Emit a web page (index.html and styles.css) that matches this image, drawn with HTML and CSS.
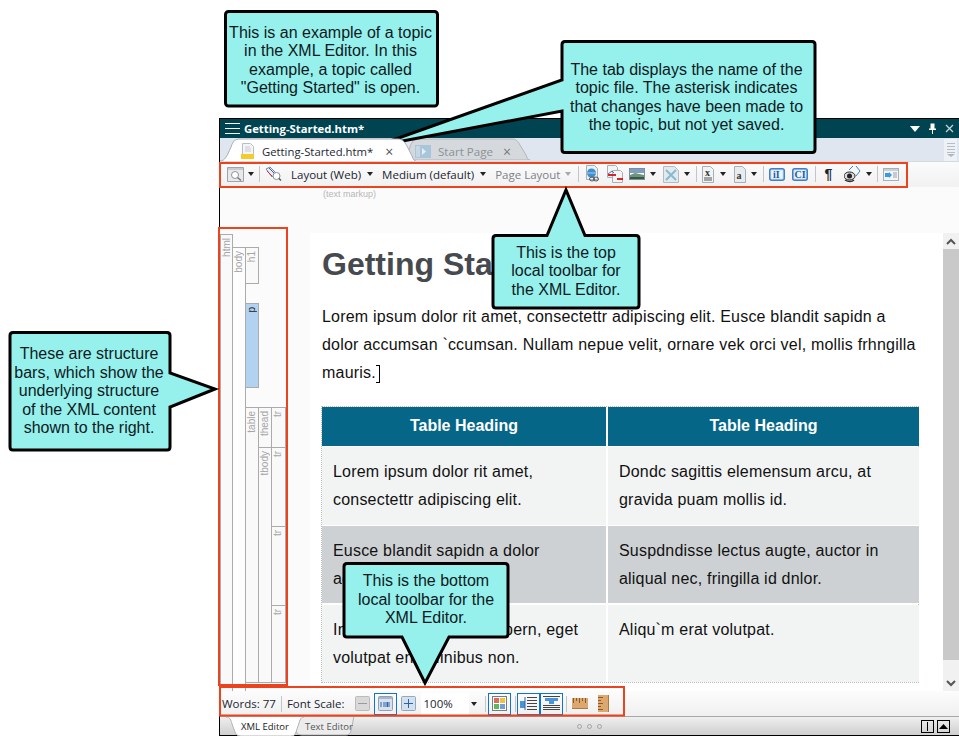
FILE: index.html
```html
<!DOCTYPE html>
<html lang="en">
<head>
<meta charset="utf-8">
<title>XML Editor</title>
<link rel="stylesheet" href="styles.css">
</head>
<body>
<div class="stage">
  <div class="window">
    <header class="titlebar">
      <svg class="hamburger" width="15" height="13" viewBox="0 0 15 13"><path d="M0 1.500h15M0 6.500h15M0 11.500h15" stroke="#fff" stroke-width="1"/></svg>
      <span class="title">Getting-Started.htm*</span>
      <span class="title-actions">
        <svg width="10" height="6" viewBox="0 0 10 6"><path d="M0 0h10L5 6z" fill="#fff"/></svg>
        <svg width="9" height="11" viewBox="0 0 9 11"><path d="M2.500 .5h4v5h1.500v1.500H5v4H4V7H1V5.500h1.500z" fill="#fff"/></svg>
        <svg width="9" height="9" viewBox="0 0 9 9"><path d="M1 1l7 7M8 1L1 8" stroke="#c5d3d8" stroke-width="1.300"/></svg>
      </span>
    </header>

    <nav class="tabstrip">
      <div class="tab tab-active">
        <svg class="tab-shape" width="196" height="23" viewBox="0 0 196 23"><path d="M0 23C5 23 7 18 11 9 13 3 15 1 20 1H178C182 1 184 3 187 8L192 18C193 21 194 23 196 23" fill="#fff" stroke="#a9adb2"/></svg>
        <svg class="tab-icon" width="16" height="17" viewBox="0 0 16 17"><path d="M2.500 .5h8l3 3v12h-11z" fill="#f4f5f6" stroke="#b9bfc5"/><path d="M5 4h5M5 6h6M5 8h6" stroke="#c5ccd2"/><rect x="1" y="11" width="13" height="5" fill="#f5cb2e"/></svg>
        <span class="tab-label">Getting-Started.htm*</span>
        <span class="tab-close">×</span>
      </div>
      <div class="tab tab-idle">
        <svg class="tab-shape" width="128" height="22" viewBox="0 0 128 22"><path d="M0 22C3 20 6 16 8 9 10 3 12 1 17 1H110C114 1 116 3 118 7L124 17C125 20 126 22 128 22z" fill="#d5d8dc" stroke="#b2b6bb"/></svg>
        <svg class="tab-icon" width="16" height="13" viewBox="0 0 16 13"><rect width="16" height="13" fill="#a9c5da"/><rect x="1" y="1" width="4" height="11" fill="#c6d8e6"/><path d="M7 3l4 3.500-4 3.500z" fill="#e6eff6"/></svg>
        <span class="tab-label">Start Page</span>
        <span class="tab-close">×</span>
      </div>
      <div class="tab-overflow">
        <svg width="10" height="14" viewBox="0 0 10 14"><path d="M1 .5h8M1 3.500h8M1 6.500h8M1 9.500h8" stroke="#b4bdc8"/><path d="M1 11h8l-4 3z" fill="#aeb8c4"/></svg>
      </div>
    </nav>

    <div class="toolbar">
      <svg class="ico" width="17" height="15" viewBox="0 0 17 15"><path d="M.5 .5h16v14H.5z" fill="#e7e9ea" stroke="#9fa4a8"/><path d="M1 1h15v2H1z" fill="#c8ccd0"/><circle cx="8" cy="8" r="3.500" fill="#fff" stroke="#8e9499"/><path d="M10.500 10.500l3.500 3" stroke="#777" stroke-width="1.500"/></svg>
      <i class="arrow a-first"></i>
      <i class="sep s-1"></i>
      <svg class="ico i-tag" width="17" height="16" viewBox="0 0 17 16"><path d="M1 3l4-2 6 6-4 4z" fill="#e9edf1" stroke="#7e8a96"/><path d="M2 5l5 5" stroke="#c33"/><path d="M4 2l5 5" stroke="#35c"/><circle cx="11.500" cy="10" r="3.500" fill="#fff" stroke="#88919a"/><path d="M14 12.500l2 2" stroke="#555" stroke-width="1.500"/></svg>
      <span class="tool-text t-layout">Layout (Web)</span>
      <i class="arrow"></i>
      <span class="tool-text t-medium">Medium (default)</span>
      <i class="arrow"></i>
      <span class="tool-text t-page dim">Page Layout</span>
      <i class="arrow dim-arrow"></i>
      <i class="sep s-2"></i>
      <svg class="ico i-a" width="16" height="18" viewBox="0 0 16 18"><path d="M1.500 .5h8l3 3v11h-11z" fill="#eef1f3" stroke="#a8b0b6"/><circle cx="6.500" cy="8" r="4.500" fill="#3e8ed0"/><path d="M2 8h9" stroke="#a5d0ef"/><ellipse cx="11" cy="14" rx="2.500" ry="2" fill="none" stroke="#555"/><ellipse cx="7" cy="14" rx="2.500" ry="2" fill="none" stroke="#555"/></svg>
      <svg class="ico i-b" width="16" height="18" viewBox="0 0 16 18"><path d="M.5 .5h8l2 2v10h-10z" fill="#f2f4f5" stroke="#a8b0b6"/><path d="M5.500 5.500h8l2 2v10h-10z" fill="#f2f4f5" stroke="#a8b0b6"/><path d="M1 9l4-3 2 2" fill="none" stroke="#3a79c4"/><path d="M1 10h8" stroke="#d22" stroke-width="2"/><path d="M10 14h6" stroke="#d22" stroke-width="2"/></svg>
      <svg class="ico i-c" width="16" height="12" viewBox="0 0 16 12"><rect x=".5" y=".5" width="15" height="11" fill="#fff" stroke="#7d8f9c"/><rect x="1" y="1" width="14" height="4" fill="#7f9fc0"/><path d="M1 7l5-2 9 2v2H1z" fill="#6e9477"/><rect x="1" y="9" width="14" height="2" fill="#355a45"/></svg>
      <i class="arrow a-c"></i>
      <svg class="ico i-d" width="16" height="17" viewBox="0 0 16 17"><path d="M.5 .5h11l4 4v12H.5z" fill="#e4e9eb" stroke="#b4bcc1"/><path d="M3 4l10 10M13 4L3 14" stroke="#84bbd3" stroke-width="2"/></svg>
      <i class="arrow a-d"></i>
      <i class="sep s-3"></i>
      <svg class="ico i-e" width="12" height="17" viewBox="0 0 12 17"><path d="M.5 .5h8l3 3v13H.5z" fill="#f1f3f4" stroke="#a7b0b6"/><text x="3" y="10" class="doc-glyph">x</text><path d="M2 12h8M2 14h8" stroke="#555"/></svg>
      <i class="arrow a-e"></i>
      <svg class="ico i-f" width="12" height="17" viewBox="0 0 12 17"><path d="M.5 .5h8l3 3v13H.5z" fill="#e9ecee" stroke="#a7b0b6"/><text x="2.500" y="12.500" class="doc-glyph">a</text></svg>
      <i class="arrow a-f"></i>
      <i class="sep s-4"></i>
      <svg class="ico i-g" width="16" height="13" viewBox="0 0 16 13"><rect x=".75" y=".75" width="14.500" height="11.500" rx="2" fill="#cfe1f5" stroke="#3f80cc" stroke-width="1.500"/><rect x="2.500" y="2.500" width="11" height="8" fill="#edf4fb"/><text x="4" y="10" class="doc-glyph small">iI</text></svg>
      <svg class="ico i-h" width="16" height="13" viewBox="0 0 16 13"><rect x=".75" y=".75" width="14.500" height="11.500" rx="2" fill="#cfe1f5" stroke="#3f80cc" stroke-width="1.500"/><rect x="2.500" y="2.500" width="11" height="8" fill="#edf4fb"/><text x="2.500" y="10" class="doc-glyph small">CI</text></svg>
      <i class="sep s-5"></i>
      <span class="pilcrow">¶</span>
      <svg class="ico i-i" width="17" height="18" viewBox="0 0 17 18"><path d="M5 5l4-4M12 1l4 5-4 5" fill="none" stroke="#3a84d2"/><ellipse cx="5.500" cy="11" rx="5.500" ry="4" fill="#ddd" stroke="#222"/><circle cx="5.500" cy="11" r="2.500" fill="#222"/><path d="M1 15c3 2 7 2 9 0" fill="none" stroke="#333" stroke-width="1.500"/></svg>
      <i class="arrow a-i"></i>
      <i class="sep s-6"></i>
      <svg class="ico i-j" width="16" height="13" viewBox="0 0 16 13"><rect x=".5" y=".5" width="15" height="12" fill="#f2f4f6" stroke="#a7b0b6"/><path d="M1 1h14v2H1z" fill="#c9d0d6"/><path d="M2 5h4V4l3 3-3 3V9H2z" fill="#3a9be0"/><path d="M10 5h4M10 7h4M10 9h4" stroke="#9aa3aa"/></svg>
    </div>

    <main class="editor">
      <div class="markup-row"><span class="markup-label">(text markup)</span></div>
      <div class="editor-body">
        <aside class="bars">
          <div class="bar b-html"><span>html</span></div>
          <div class="bar b-body"><span>body</span></div>
          <div class="bar b-h1"><span>h1</span></div>
          <div class="bar b-p active"><span>p</span></div>
          <div class="bar b-table"><span>table</span></div>
          <div class="bar b-thead"><span>thead</span></div>
          <div class="bar b-tr0"><span>tr</span></div>
          <div class="bar b-tbody"><span>tbody</span></div>
          <div class="bar b-tr1"><span>tr</span></div>
          <div class="bar b-tr2"><span>tr</span></div>
          <div class="bar b-tr3"><span>tr</span></div>
        </aside>
        <article class="doc">
          <h1>Getting Started</h1>
          <p>Lorem ipsum dolor rit amet, consectettr adipiscing elit. Eusce blandit sapidn a dolor accumsan `ccumsan. Nullam nepue velit, ornare vek orci vel, mollis frhngilla mauris.<span class="caret"></span></p>
          <div class="table">
            <div class="th">Table Heading</div>
            <div class="th">Table Heading</div>
            <div class="td light">Lorem ipsum dolor rit amet, consectettr adipiscing elit.</div>
            <div class="td light">Dondc sagittis elemensum arcu, at gravida puam mollis id.</div>
            <div class="td dark">Eusce blandit sapidn a dolor accumsan `ccumsan.</div>
            <div class="td dark">Suspdndisse lectus augte, auctor in aliqual nec, fringilla id dnlor.</div>
            <div class="td light">Integer vitae leo ac tempern, eget volutpat enim finibus non.</div>
            <div class="td light">Aliqu`m erat volutpat.</div>
          </div>
        </article>
        <div class="scrollbar">
          <div class="scroll-btn top-btn"><svg width="10" height="7" viewBox="0 0 10 7"><path d="M1 6l4-4 4 4" fill="none" stroke="#555" stroke-width="2"/></svg></div>
          <div class="scroll-track"></div>
          <div class="scroll-btn bot-btn"><svg width="10" height="7" viewBox="0 0 10 7"><path d="M1 1l4 4 4-4" fill="none" stroke="#555" stroke-width="2"/></svg></div>
        </div>
      </div>
    </main>

    <div class="statusbar">
      <span class="st-text st-words">Words: 77</span>
      <i class="sep st-s1"></i>
      <span class="st-text">Font Scale:</span>
      <span class="st-btn st-minus"><svg width="15" height="15" viewBox="0 0 15 15"><rect x=".5" y=".5" width="14" height="14" rx="1" fill="#d9d9d9" stroke="#bbb"/><path d="M3 7.500h9" stroke="#999"/></svg></span>
      <span class="st-btn boxed st-100"><svg width="15" height="15" viewBox="0 0 15 15"><rect x=".5" y=".5" width="14" height="14" rx="1" fill="#d8e2ee" stroke="#8ea1b6"/><rect x="1" y="1" width="13" height="2" fill="#a8b6c6"/><path d="M3 6v5M6 6v5M8 6v5M9.500 6v5M11 6v5" stroke="#2a64a8"/></svg></span>
      <span class="st-btn st-plus"><svg width="15" height="15" viewBox="0 0 15 15"><rect x=".5" y=".5" width="14" height="14" rx="1" fill="#d3e0ee" stroke="#93a8bf"/><path d="M7.500 3v9M3 7.500h9" stroke="#2a64a8"/></svg></span>
      <span class="combo">100%</span>
      <i class="arrow st-arrow"></i>
      <i class="sep st-s2"></i>
      <span class="st-btn boxed"><svg width="15" height="15" viewBox="0 0 15 15"><rect x=".5" y=".5" width="14" height="14" fill="#fff" stroke="#7b7b7b"/><rect x="2" y="2" width="5" height="5" fill="#d96b5e"/><rect x="8" y="2" width="5" height="5" fill="#f0c040"/><rect x="2" y="8" width="5" height="5" fill="#5cb85c"/><rect x="8" y="8" width="5" height="5" fill="#6f9fd8"/></svg></span>
      <i class="sep st-s3"></i>
      <span class="st-btn boxed st-joined"><svg width="17" height="15" viewBox="0 0 17 15"><path d="M0 5h5v7H0z" fill="#4a94d8"/><path d="M5 1v13" stroke="#2a64a8"/><path d="M7 1.500h10M7 4.500h10M7 7.500h10M7 10.500h10M7 13.500h10" stroke="#444"/></svg></span>
      <span class="st-btn boxed st-joined2"><svg width="17" height="15" viewBox="0 0 17 15"><path d="M0 .5h17" stroke="#444"/><path d="M2 2h13v3H2z" fill="#4a94d8"/><path d="M6 5h5v3H6z" fill="#4a94d8"/><path d="M0 9.500h17M0 11.500h17M0 13.500h17" stroke="#444"/></svg></span>
      <i class="sep st-s4"></i>
      <span class="st-ruler-h"><svg width="16" height="11" viewBox="0 0 16 11"><rect width="16" height="11" fill="#dca870"/><path d="M1.500 0v5M4.500 0v3M7.500 0v5M10.500 0v3M13.500 0v5" stroke="#8a5a2a"/><path d="M0 10.500h16" stroke="#a87a44"/></svg></span>
      <span class="st-ruler-v"><svg width="11" height="17" viewBox="0 0 11 17"><rect width="11" height="17" fill="#dca870"/><path d="M0 2.500h5M0 5.500h3M0 8.500h5M0 11.500h3M0 14.500h5" stroke="#8a5a2a"/><path d="M10.500 0v17" stroke="#a87a44"/></svg></span>
    </div>

    <footer class="editor-tabs">
      <svg class="etab-shape" width="132" height="19" viewBox="0 0 132 19"><path d="M68 0l6 15c1 3 3 4 6 4h44c3 0 4-1 5-4l3-15" fill="#ececec" stroke="#b4b4b4" transform="translate(-4 -1)"/><path d="M0 0c4 0 5 3 6 7l3 8c1 3 3 4 6 4h50c3 0 4-1 5-4l4-12c1-2 2-3 4-3" fill="#fff" stroke="#b4b4b4"/></svg>
      <span class="etab on">XML Editor</span>
      <span class="etab">Text Editor</span>
      <span class="dots"><b></b><b></b><b></b></span>
      <span class="view-btns">
        <span class="view-btn"><svg width="11" height="11" viewBox="0 0 11 11"><path d="M5.500 1v9" stroke="#000"/></svg></span>
        <span class="view-btn"><svg width="11" height="11" viewBox="0 0 11 11"><path d="M1 8l4.500-5L10 8z" fill="#000"/></svg></span>
      </span>
    </footer>
  </div>

  <svg class="annotations" width="959" height="736" viewBox="0 0 959 736">
    <g class="red">
      <rect x="220" y="163" width="687" height="24"/>
      <rect x="219" y="228" width="68" height="457"/>
      <rect x="220" y="687" width="404" height="28.500"/>
    </g>
    <g class="shape">
      <rect x="225.500" y="11.500" width="212" height="94.500" rx="3"/>
      <path d="M565 41.500H812q3 0 3 3V149.500q0 3-3 3H565q-3 0-3-3V111L376 146 562 80V44.500q0-3 3-3z"/>
      <path d="M496 235.500H547L566 190l19 45.500H636q3 0 3 3V305q0 3-3 3H496q-3 0-3-3V238.500q0-3 3-3z"/>
      <path d="M347 563.500H505q3 0 3 3V634q0 3-3 3H449L425 683 402 637H347q-3 0-3-3V566.500q0-3 3-3z"/>
      <path d="M13 332.500H167q3 0 3 3V373l45 16-45 18v40q0 3-3 3H13q-3 0-3-3V335.500q0-3 3-3z"/>
    </g>
  </svg>
  <div class="callout c-example">This is an example of a topic<br>in the XML Editor. In this<br>example, a topic called<br>"Getting Started" is open.</div>
  <div class="callout c-tab">The tab displays the name of the<br>topic file. The asterisk indicates<br>that changes have been made to<br>the topic, but not yet saved.</div>
  <div class="callout c-top">This is the top<br>local toolbar for<br>the XML Editor.</div>
  <div class="callout c-bottom">This is the bottom<br>local toolbar for the<br>XML Editor.</div>
  <div class="callout c-bars">These are structure<br>bars, which show the<br>underlying structure<br>of the XML content<br>shown to the right.</div>
</div>
</body>
</html>
```

FILE: styles.css
```css
* { box-sizing: border-box; }
html, body { margin: 0; padding: 0; background: #fff; }
body { font-family: "Liberation Sans", Arial, sans-serif; }
.stage { position: relative; width: 959px; height: 736px; overflow: hidden; padding: 118px 0 0 219px; }
.window { width: 740px; height: 618px; border: 1px solid #000; border-right: 0; display: flex; flex-direction: column; background: #fff; }

/* title bar */
.titlebar { height: 19px; flex: none; background: #004351; display: flex; align-items: center; padding: 0 0 0 5px; color: #fff; }
.hamburger { flex: none; }
.title { margin-left: 4px; font: bold 11.300px "Open Sans", sans-serif; white-space: nowrap; }
.title-actions { margin-left: auto; display: flex; align-items: center; gap: 8px; padding-right: 5px; }

/* tabs */
.tabstrip { height: 23px; flex: none; background: #dfe6ef; display: flex; align-items: flex-end; position: relative; }
.tab { position: relative; height: 23px; display: flex; align-items: center; padding-top: 3px; white-space: nowrap; }
.tab > * { position: relative; }
.tab .tab-shape { position: absolute; left: 0; top: 0; }
.tab-active { width: 196px; padding-left: 20px; z-index: 2; color: #1d2733; font: 11.300px "Open Sans", sans-serif; }
.tab-active .tab-label { margin-left: 6px; }
.tab-active .tab-close { margin-left: 12px; color: #555; font-size: 14px; }
.tab-idle { width: 128px; margin-left: -14px; padding-left: 13px; color: #8b9299; font: 11.600px "Open Sans", sans-serif; }
.tab-idle .tab-label { margin-left: 7px; }
.tab-idle .tab-close { margin-left: 10px; font-size: 14px; color: #777; }
.tab-overflow { margin-left: auto; margin-right: 2px; width: 13px; height: 22px; background: #eef1f5; display: flex; align-items: center; justify-content: center; }

/* top toolbar */
.toolbar { height: 26px; flex: none; display: flex; align-items: center; background: linear-gradient(#fbfbfb, #f1f1f1); padding: 0 0 1px 7px; font: 11.500px "Open Sans", sans-serif; color: #1b2530; border-top: 1px solid #d6d9dc; }
.ico { flex: none; display: block; }
.arrow { flex: none; width: 0; height: 0; border: 3.500px solid transparent; border-top: 4px solid #222; border-bottom: 0; display: block; }
.dim-arrow { border-top-color: #a9a9a9; }
.sep { flex: none; width: 1px; height: 16px; background: #c3c5c7; display: block; }
.a-first { margin-left: 4px; }
.s-1 { margin-left: 5px; }
.i-tag { margin-left: 5px; }
.tool-text { white-space: nowrap; }
.t-layout { margin-left: 9px; }
.t-medium { margin-left: 9px; }
.t-page { margin-left: 9px; }
.t-layout + .arrow, .t-medium + .arrow { margin-left: 6px; }
.t-page + .arrow { margin-left: 5px; }
.dim { color: #7d8287; }
.s-2 { margin-left: 7px; }
.i-a { margin-left: 6px; }
.i-b { margin-left: 6px; }
.i-c { margin-left: 6px; }
.a-c, .a-d, .a-f, .a-i { margin-left: 5px; }
.a-e { margin-left: 6px; }
.i-d { margin-left: 7px; }
.s-3 { margin-left: 6px; }
.i-e { margin-left: 5px; }
.i-f { margin-left: 8px; }
.s-4 { margin-left: 6px; }
.i-g { margin-left: 5px; }
.i-h { margin-left: 7px; }
.s-5 { margin-left: 7px; }
.pilcrow { margin-left: 8px; font: bold 14px "Liberation Sans", sans-serif; width: 8px; }
.i-i { margin-left: 12px; }
.s-6 { margin-left: 5px; }
.i-j { margin-left: 5px; }
.doc-glyph { font: bold 10px "Liberation Serif", serif; fill: #333; }
.doc-glyph.small { font-size: 10px; fill: #245c9e; }

/* editor */
.editor { flex: 1; min-height: 0; display: flex; flex-direction: column; background: #fbfbfb; }
.markup-row { height: 46px; flex: none; padding: 1px 0 0 103px; }
.markup-label { font-size: 9px; color: #b6b6b6; line-height: 12px; display: block; }
.editor-body { flex: 1; min-height: 0; display: flex; }

/* structure bars */
.bars { width: 90px; flex: none; display: grid; padding-top: 1px; grid-template-columns: 12px 13px 13px 13px 14px; grid-template-rows: 13px 36px 20px 84px 20px 40px 79px 79px 77px 9px; }
.bar { border: 1px solid #ababab; background: #f9f9f9; margin-right: -1px; margin-bottom: -1px; font-size: 10px; color: #a5a5a5; overflow: hidden; }
.bar span { display: block; writing-mode: vertical-rl; transform: rotate(180deg); line-height: 12px; padding-bottom: 3px; }
.b-html { grid-column: 1; grid-row: 1 / 11; border-bottom: 0; }
.b-body { grid-column: 2; grid-row: 2 / 11; background: #fdfdfd; border-bottom: 0; }
.b-h1 { grid-column: 3; grid-row: 2 / 3; }
.b-p { grid-column: 3; grid-row: 4 / 5; background: #b1d3f1; color: #222; }
.b-table { grid-column: 3; grid-row: 6 / 10; }
.b-thead { grid-column: 4; grid-row: 6 / 7; }
.b-tr0 { grid-column: 5; grid-row: 6 / 7; }
.b-tbody { grid-column: 4; grid-row: 7 / 10; }
.b-tr1 { grid-column: 5; grid-row: 7; }
.b-tr2 { grid-column: 5; grid-row: 8; }
.b-tr3 { grid-column: 5; grid-row: 9; }

/* document */
.doc { flex: 1; min-width: 0; background: #fff; padding: 0 0 0 12px; overflow: hidden; color: #111; }
.doc h1 { margin: 0; padding-top: 13px; height: 57px; font-size: 32px; line-height: 37px; font-weight: bold; color: #464a4f; white-space: nowrap; }
.doc p { margin: 0; width: 597px; padding-top: 13px; height: 116px; font-size: 16px; line-height: 28px; letter-spacing: .2px; }
.caret { display: inline-block; width: 4px; height: 18px; border: 1px solid #000; border-left: 0; vertical-align: -5px; }
.table { width: 598px; margin-left: -1px; border: 1px dotted #bcbcbc; display: grid; grid-template-columns: 284px 311px; column-gap: 2px; row-gap: 1px; grid-template-rows: 39px 78px 78px 77px; background: #fff; }
.th { background: #066687; color: #fff; font-weight: bold; font-size: 16px; padding-bottom: 2px; display: flex; align-items: center; justify-content: center; }
.td { font-size: 16px; line-height: 28px; letter-spacing: .2px; padding: 11px 12px 0 11px; }
.light { background: #f2f4f4; }
.dark { background: #ced1d4; height: 77px; }

/* scrollbar */
.scrollbar { width: 16px; flex: none; display: flex; flex-direction: column; background: #fff; }
.scroll-btn { height: 16px; background: #f1f1f1; display: flex; align-items: center; justify-content: center; flex: none; }
.bot-btn { height: 31px; align-items: flex-end; padding-bottom: 4px; }
.scroll-track { flex: 1; background: #c9c9c9; }

/* bottom toolbar */
.statusbar { height: 25px; flex: none; display: flex; align-items: center; background: linear-gradient(#fcfcfc, #f0f0f0); padding-left: 2px; font: 11.500px "Open Sans", sans-serif; color: #1b2530; }
.st-text { white-space: nowrap; }
.st-s1 { margin: 0 5px; }
.st-btn { flex: none; display: flex; align-items: center; justify-content: center; }
.st-minus { margin-left: 10px; }
.boxed { width: 23px; height: 22px; border: 1px solid #0f73d3; }
.st-100 { margin-left: 4px; }
.st-plus { margin-left: 4px; }
.combo { flex: none; width: 48px; height: 22px; line-height: 22px; background: #fff; padding-left: 3px; margin-left: 5px; }
.st-arrow { margin-left: 2px; }
.st-s2 { margin-left: 8px; margin-right: 2px; }
.st-s3 { margin-left: 4px; margin-right: 1px; }
.st-s4 { margin-left: 3px; }
.st-ruler-h { margin-left: 5px; display: block; line-height: 0; }
.st-ruler-v { margin-left: 10px; display: block; line-height: 0; }

/* bottom tabs */
.editor-tabs { flex: none; height: 19px; position: relative; display: flex; align-items: center; background: linear-gradient(#efefef, #cfcfcf); border-top: 1px solid #a9a9a9; padding-left: 21px; color: #555; }
.etab-shape { position: absolute; left: 6px; top: 0; }
.etab { position: relative; width: 64px; white-space: nowrap; font: 9.500px "Open Sans", sans-serif; }
.etab.on { color: #222; }
.dots { margin-left: 208px; display: flex; gap: 5px; }
.dots b { width: 5px; height: 5px; border: 1px solid #a3a3a3; border-radius: 50%; display: block; }
.view-btns { margin-left: auto; margin-right: 9px; display: flex; gap: 3px; }
.view-btn { width: 13px; height: 13px; border: 1px solid #000; display: flex; align-items: center; justify-content: center; }

/* overlay annotations */
.annotations { position: absolute; left: 0; top: 0; }
.red rect { fill: none; stroke: #ea431d; stroke-width: 2; }
.shape > * { fill: #96f0ec; stroke: #000; stroke-width: 3; stroke-linejoin: miter; }
.callout { position: absolute; display: flex; align-items: center; justify-content: center; text-align: center; font-size: 16px; line-height: 18.500px; color: #0e1a1d; white-space: nowrap; }
.c-example { left: 224px; top: 12px; width: 213px; height: 97px; }
.c-tab { left: 560px; top: 42px; width: 253px; height: 111px; }
.c-top { left: 493px; top: 235px; width: 146px; height: 73px; }
.c-bottom { left: 344px; top: 563px; width: 164px; height: 74px; }
.c-bars { left: 9px; top: 332px; width: 160px; height: 119px; }
```
